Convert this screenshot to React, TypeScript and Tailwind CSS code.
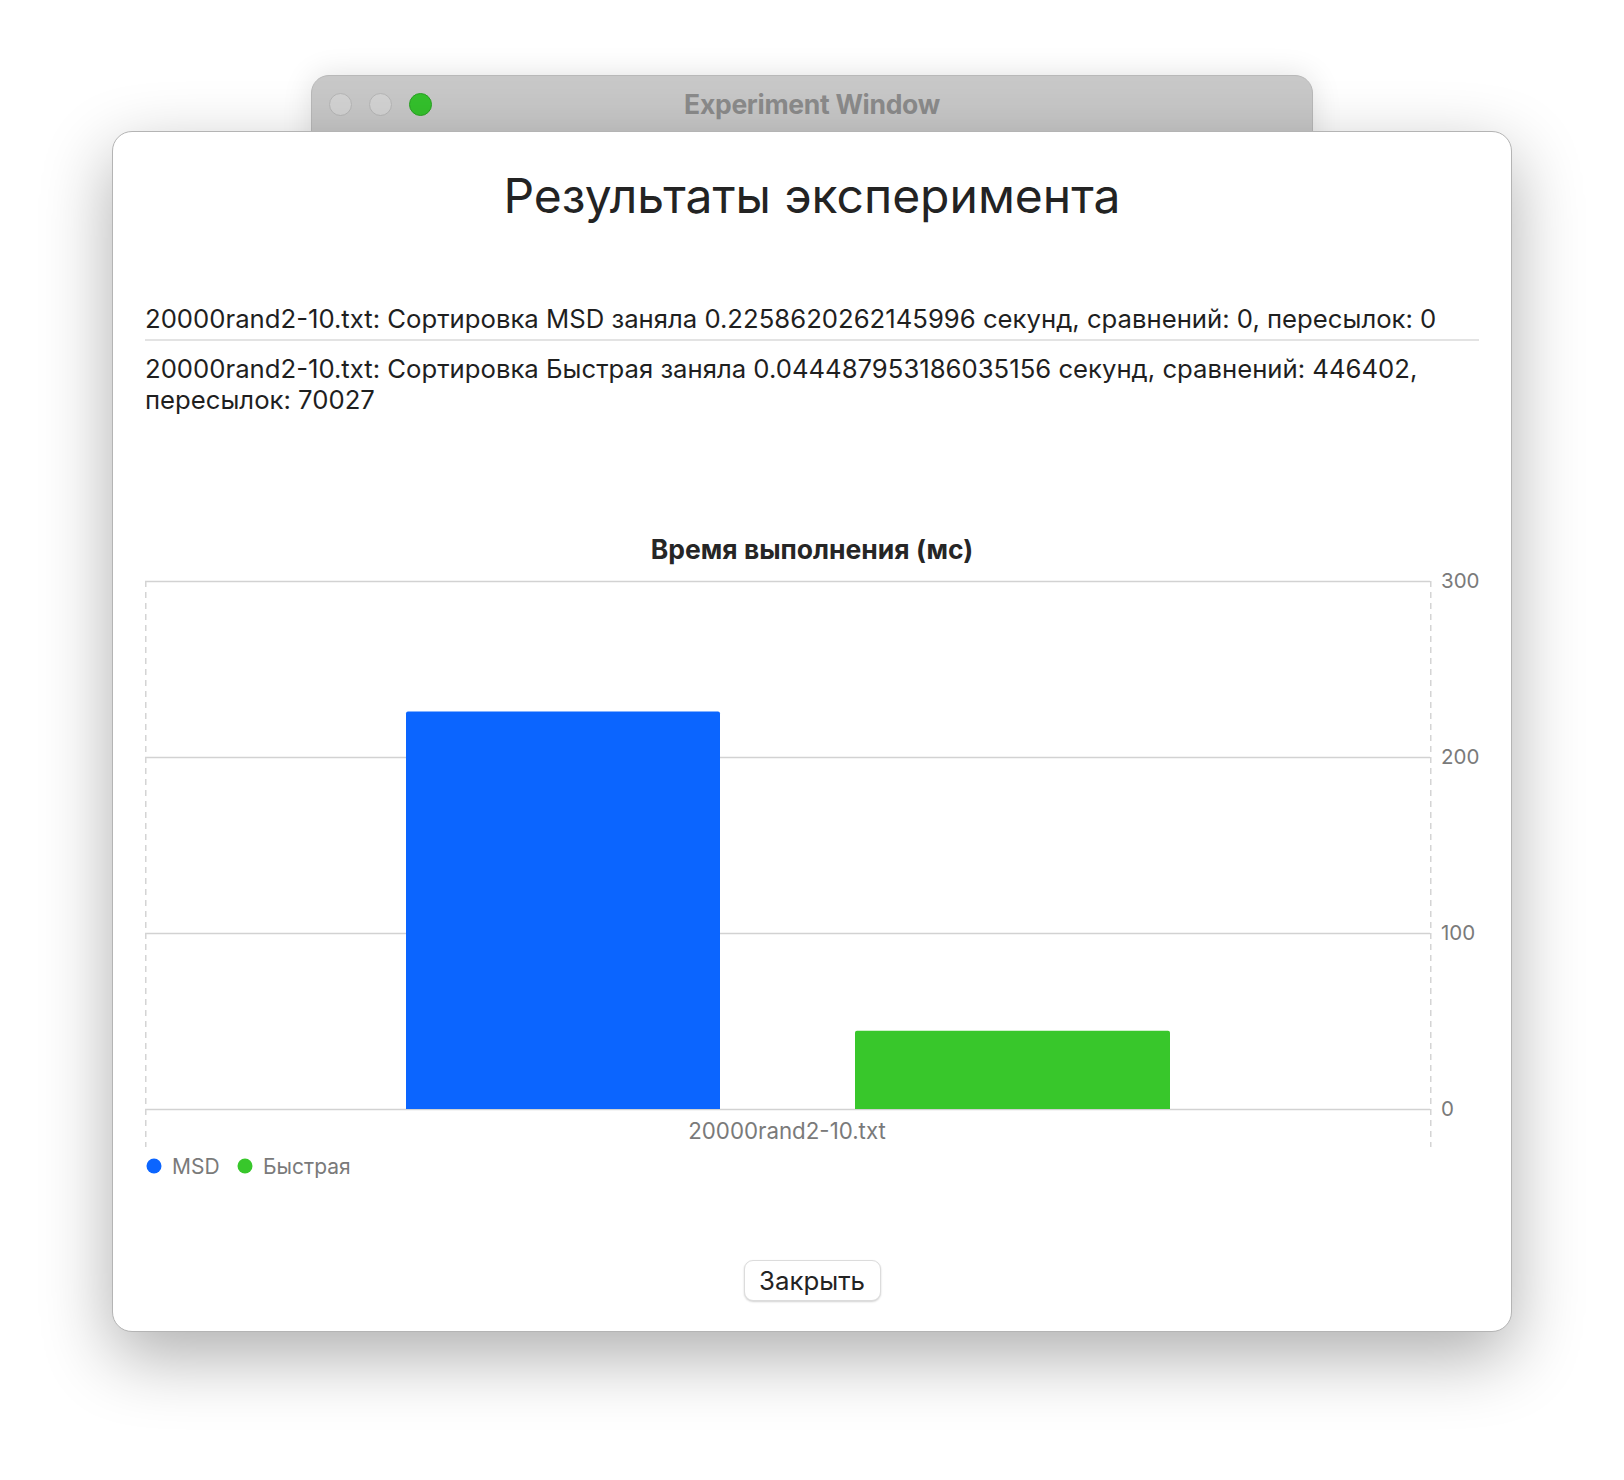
import React from "react";

const font = { fontFamily: "Inter, 'Noto Sans', sans-serif" };

function Chart() {
  const o = 12;
  const base = 538 + o;
  const scale = 1.76;
  const msd = 225.8620262145996;
  const quick = 44.487953186035156;
  const mt = base - msd * scale;
  const qt = base - quick * scale;
  return (
    <svg width="1336" height="624" viewBox="0 0 1336 624" className="block" style={font}>
      {[10, 186, 362, 538].map((y) => (
        <line key={y} x1="0" y1={y + o + 0.5} x2="1285" y2={y + o + 0.5} stroke="#d2d2d2" strokeWidth="1.5" />
      ))}
      <line x1="0.75" y1={10 + o} x2="0.75" y2={576 + o} stroke="#d4d4d4" strokeWidth="1.5" strokeDasharray="6 5" />
      <line x1="1285.75" y1={10 + o} x2="1285.75" y2={576 + o} stroke="#d4d4d4" strokeWidth="1.5" strokeDasharray="6 5" />
      {[
        [10, "300"],
        [186, "200"],
        [362, "100"],
        [538, "0"],
      ].map(([y, t]) => (
        <text key={t as string} x="1296" y={(y as number) + o + 7} fontSize="20.5" fill="#7a7a7a">
          {t}
        </text>
      ))}
      <path d={`M261 ${base} V${mt + 2} Q261 ${mt} 263 ${mt} H573 Q575 ${mt} 575 ${mt + 2} V${base} Z`} fill="#0b65ff" />
      <path d={`M710 ${base} V${qt + 2} Q710 ${qt} 712 ${qt} H1023 Q1025 ${qt} 1025 ${qt + 2} V${base} Z`} fill="#38c72b" />
      <text x="642" y={568 + o} fontSize="22.3" fill="#7a7a7a" textAnchor="middle">
        20000rand2-10.txt
      </text>
      <circle cx="9" cy={595 + o} r="7.5" fill="#0b65ff" />
      <text x="27" y={602.5 + o} fontSize="21" fill="#7a7a7a">
        MSD
      </text>
      <circle cx="100" cy={595 + o} r="7.5" fill="#38c72b" />
      <text x="118" y={602.5 + o} fontSize="21" fill="#7a7a7a">
        Быстрая
      </text>
    </svg>
  );
}

export default function App() {
  return (
    <div className="relative w-[1624px] h-[1480px] bg-white overflow-hidden" style={font}>
      {/* back window */}
      <div className="absolute left-[311px] top-[75px] w-[1002px] h-[400px] rounded-t-[18px] bg-[#c8c8c8] shadow-[0_0_30px_rgba(0,0,0,0.12)] border border-[#b9b9b9]">
        <div className="relative h-[58px] flex items-center justify-center">
          <div className="absolute left-[17px] top-[17px] flex gap-[17px]">
            <span className="w-[23px] h-[23px] rounded-full bg-[#d3d3d3] border border-[#b6b6b6]" />
            <span className="w-[23px] h-[23px] rounded-full bg-[#d3d3d3] border border-[#b6b6b6]" />
            <span className="w-[23px] h-[23px] rounded-full bg-[#34c12c] border border-[#2aa124]" />
          </div>
          <span className="text-[26.5px] font-bold text-[#8b8b8b] tracking-[-0.3px]">Experiment Window</span>
        </div>
      </div>

      {/* sheet */}
      <div className="absolute left-[112px] top-[131px] w-[1400px] h-[1201px] rounded-[20px] bg-white border border-[#b4b4b4] shadow-[0_24px_70px_rgba(0,0,0,0.32)] flex flex-col px-[32px]">
        <h1 className="mt-[34px] text-center text-[48px] leading-[60px] text-[#232323] font-normal">
          Результаты эксперимента
        </h1>
        <div className="mt-[77px] text-[25.7px] leading-[31px] text-[#1f1f1f]">
          <div className="pb-[5px] border-b-2 border-[#e3e3e3]">
            20000rand2-10.txt: Сортировка MSD заняла 0.2258620262145996 секунд, сравнений: 0, пересылок: 0
          </div>
          <div className="pt-[12px] pr-[40px]">
            20000rand2-10.txt: Сортировка Быстрая заняла 0.044487953186035156 секунд, сравнений: 446402, пересылок: 70027
          </div>
        </div>
        <div className="mt-[119px] text-center text-[26.5px] leading-[30px] font-bold text-[#262626]">
          Время выполнения (мс)
        </div>
        <div className="mt-[-5px]">
          <Chart />
        </div>
        <div className="flex justify-center mt-[77px]">
          <button className="w-[137px] h-[41px] rounded-[9px] bg-white border border-[#dcdcdc] shadow-[0_1px_2px_rgba(0,0,0,0.18)] text-[25.8px] text-[#232323] leading-none">
            Закрыть
          </button>
        </div>
      </div>
    </div>
  );
}
